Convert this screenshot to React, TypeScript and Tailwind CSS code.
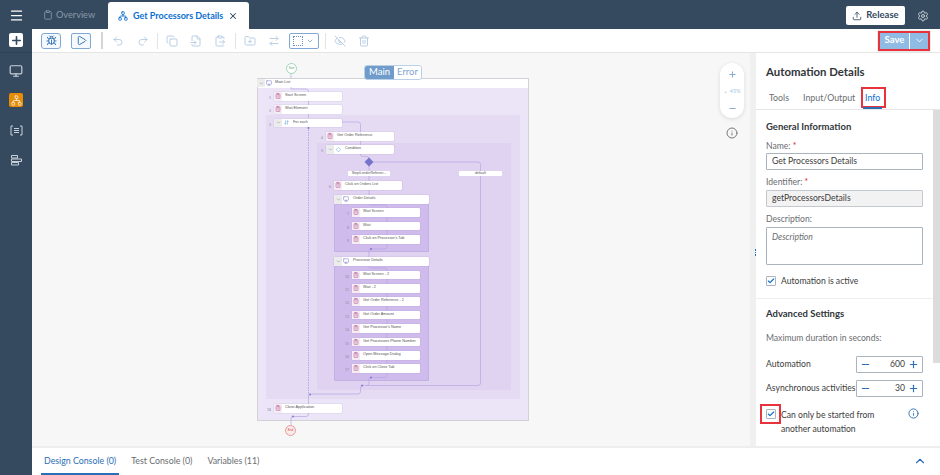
import React from "react";
import {
  ArrowDownUp,
  ArrowRightLeft,
  Bug,
  Check,
  ChevronDown,
  ChevronUp,
  Clipboard,
  ClipboardList,
  ClipboardPaste,
  Copy,
  Diamond,
  EyeOff,
  FileInput,
  FolderPlus,
  Info,
  Menu,
  Minus,
  Monitor,
  Network,
  Play,
  Plus,
  Redo2,
  Settings,
  Trash2,
  Undo2,
  Upload,
  X,
} from "lucide-react";

type Step = { n?: string; label: string; x: number; y: number; w?: number; group?: boolean; icon?: string };

const steps: Step[] = [
  { n: "1", label: "Start Screen", x: 274, y: 92 },
  { n: "2", label: "Wait Element", x: 274, y: 105 },
  { n: "3", label: "For each", x: 274, y: 118.5, group: true, icon: "loop" },
  { n: "4", label: "Get Order Reference", x: 326, y: 132 },
  { n: "5", label: "Condition", x: 326, y: 145, group: true, icon: "cond" },
  { n: "6", label: "Click on Orders List", x: 334, y: 181 },
  { label: "Order Details", x: 334, y: 195, w: 95, group: true, icon: "sub" },
  { n: "7", label: "Wait Screen", x: 352, y: 208 },
  { n: "8", label: "Wait", x: 352, y: 221.5 },
  { n: "9", label: "Click on Processor's Tab", x: 352, y: 235 },
  { label: "Processor Details", x: 334, y: 257, w: 95, group: true, icon: "sub" },
  { n: "10", label: "Wait Screen - 2", x: 352, y: 270.5 },
  { n: "11", label: "Wait - 2", x: 352, y: 284 },
  { n: "12", label: "Get Order Reference - 2", x: 352, y: 297 },
  { n: "13", label: "Get Order Amount", x: 352, y: 310.5 },
  { n: "14", label: "Get Processor's Name", x: 352, y: 324 },
  { n: "15", label: "Get Processors Phone Number", x: 352, y: 337.5 },
  { n: "16", label: "Open Message Dialog", x: 352, y: 351 },
  { n: "17", label: "Click on Close Tab", x: 352, y: 364 },
  { n: "18", label: "Close Application", x: 274, y: 404 },
];

// canvas starts at x=32, y=53
const CX = 32;
const CY = 53;

// where a flow line comes back in
const dots = [
  [308.5, 128],
  [371, 249],
  [371, 377.5],
  [362, 385.5],
  [310, 394.5],
  [293, 416.5],
];

function Node({ s }: { s: Step }) {
  return (
    <>
      {s.n && (
        <span
          className="absolute text-[3.5px] leading-none text-[#8a8a9a]"
          style={{ left: s.x - 5 - (s.n.length - 1) * 2 - CX, top: s.y + 5 - CY }}
        >
          {s.n}
        </span>
      )}
      <div
        className="absolute flex h-[8.5px] items-center overflow-hidden rounded-[1px] bg-white shadow-[0_0_1px_#8f7fb8]"
        style={{ left: s.x - CX, top: s.y - CY, width: s.w ?? 68 }}
      >
        {s.group ? (
          <span className="flex h-full w-[8px] flex-none items-center justify-center bg-[#ececec]">
            <ChevronDown size={5} className="text-[#777]" />
          </span>
        ) : (
          <span className="flex h-full w-[8px] flex-none items-center justify-center bg-[#f6ecf4]">
            <ClipboardList size={6} className="text-[#b0568f]" />
          </span>
        )}
        {s.group && (
          <span className="flex w-[8px] flex-none items-center justify-center">
            {s.icon === "loop" && <ArrowDownUp size={5} className="text-[#3d8ad9]" />}
            {s.icon === "cond" && <Diamond size={5} className="text-[#3d8ad9]" />}
            {s.icon === "sub" && <Monitor size={6} className="text-[#7a79c9]" />}
          </span>
        )}
        <span className="ml-[3px] whitespace-nowrap font-['Liberation_Sans',sans-serif] text-[3.8px] leading-none text-[#555]">
          {s.label}
        </span>
      </div>
    </>
  );
}

function Diagram() {
  return (
    <>
      <div className="absolute left-[254px] top-[10px] flex h-[11px] w-[11px] items-center justify-center rounded-full border border-[#9fd6b4] bg-white font-['Liberation_Sans',sans-serif] text-[2.6px] text-[#3f9f66]">
        Start
      </div>
      <div className="absolute left-[225px] top-[25px] h-[343px] w-[272px] border border-[#d3d1d8] bg-[#ece5f8]">
        <div className="absolute left-0 top-0 h-[9px] w-full bg-white" />
      </div>
      <div className="absolute left-[234px] top-[62px] h-[284px] w-[254px] bg-[#e5dcf3]" />
      <div className="absolute left-[285px] top-[90px] h-[247px] w-[194px] bg-[#e0d2f1]" />
      <div className="absolute left-[302px] top-[142px] h-[57px] w-[95px] rounded-[1px] border border-[#c3b0e2] bg-[#d0bcec]" />
      <div className="absolute left-[302px] top-[204px] h-[124px] w-[95px] rounded-[1px] border border-[#c3b0e2] bg-[#d0bcec]" />

      <div className="absolute left-[225px] top-[26px] flex h-[8px] items-center">
        <span className="flex h-full w-[8px] items-center justify-center bg-[#ececec]">
          <ChevronDown size={5} className="text-[#777]" />
        </span>
        <Monitor size={6} className="ml-[1px] text-[#7a79c9]" />
        <span className="ml-[3px] font-['Liberation_Sans',sans-serif] text-[3.8px] text-[#555]">Main List</span>
      </div>

      <svg className="absolute left-0 top-0" width={718} height={393} viewBox="32 53 718 393" fill="none" stroke="#b5a6e4" strokeWidth={0.7}>
        <path d="M291 74v4M291 87v2h15a2.500 2.500 0 0 1 2.500 2.500V118" />
        <path d="M308.500 127V395" stroke="#a495e6" strokeDasharray="1.500 1" />
        <path d="M308.500 395V414a2.500 2.500 0 0 1 -2.500 2.500H293a2 2 0 0 0 -2 2V425" />
        <path d="M342 122h16a2.500 2.500 0 0 1 2.500 2.500V132M360.500 140V145" />
        <path d="M360.500 153v1.500a2 2 0 0 0 2 2h4.500a2 2 0 0 1 2 2v1" />
        <path d="M373 162H478a2.500 2.500 0 0 1 2.500 2.500V383a2.500 2.500 0 0 1 -2.500 2.500H363a2.500 2.500 0 0 0 -2.500 2.500v3.500a2.500 2.500 0 0 1 -2.500 2.500H310" />
        <path d="M369 166V181M369 189V195" />
        <path d="M369 203a2 2 0 0 0 2 2h14a2 2 0 0 1 2 2V246a3 3 0 0 1 -3 3H371a2 2 0 0 0 -2 2V257" />
        <path d="M369 266a2 2 0 0 0 2 2h14a2 2 0 0 1 2 2V375a2.500 2.500 0 0 1 -2.500 2.500H371a2 2 0 0 0 -2 2V383a2.500 2.500 0 0 1 -2.500 2.500" />
        <path d="M369 157.500l4.500 4.500-4.500 4.500-4.500-4.500z" fill="#7474cc" stroke="none" />
        {dots.map(([x, y]) => (
          <circle key={`${x}-${y}`} cx={x} cy={y} r={0.9} fill="#7474cc" stroke="none" />
        ))}
      </svg>

      {steps.map((s) => (
        <Node key={s.label} s={s} />
      ))}

      <div className="absolute left-[316px] top-[118px] flex h-[5px] w-[42px] items-center justify-center rounded-[1px] bg-white font-['Liberation_Sans',sans-serif] text-[3.6px] text-[#555]">
        Step0.orderReferen...
      </div>
      <div className="absolute left-[427px] top-[118px] flex h-[5px] w-[43px] items-center justify-center rounded-[1px] bg-white font-['Liberation_Sans',sans-serif] text-[3.6px] text-[#555]">
        default
      </div>
      <div className="absolute left-[253px] top-[372px] flex h-[11px] w-[11px] items-center justify-center rounded-full border border-[#e79a9a] bg-[#fbeaea] font-['Liberation_Sans',sans-serif] text-[3px] text-[#c94a4a]">
        End
      </div>
    </>
  );
}

function ToolIcon({ children, className }: { children: React.ReactNode; className: string }) {
  return <span className={`flex items-center justify-center text-[#b9cfe6] ${className}`}>{children}</span>;
}

function Sep({ className }: { className: string }) {
  return <span className={`h-[16px] w-[1px] bg-[#e4e4e4] ${className}`} />;
}

function Stepper({ value }: { value: string }) {
  return (
    <div className="flex h-[17px] w-[67px] flex-none items-center rounded-[1px] border border-[#a9b4be] bg-white px-[3px]">
      <Minus size={11} strokeWidth={2.5} className="text-[#2a6eb5]" />
      <span className="flex-1 pr-[3px] text-right text-[#3c3c3c]">{value}</span>
      <Plus size={11} strokeWidth={2.5} className="text-[#2a6eb5]" />
    </div>
  );
}

function Box() {
  return (
    <span className="flex h-[10px] w-[10px] flex-none items-center justify-center rounded-[1px] border border-[#a9b4be] bg-white">
      <Check size={8} strokeWidth={3.5} className="text-[#0a6ed1]" />
    </span>
  );
}

export default function App() {
  return (
    <div className="flex h-[475px] w-[940px] overflow-hidden bg-white font-['Lato',sans-serif] text-[8.6px]">
      <aside className="flex w-[32px] flex-none flex-col items-center bg-[#354a5f] text-[#c8d1da]">
        <Menu size={15} className="mt-[8px] text-white" />
        <div className="mt-[10px] flex h-[14px] w-[14px] items-center justify-center rounded-[2px] bg-white">
          <Plus size={13} strokeWidth={3} className="text-[#354a5f]" />
        </div>
        <div className="mt-[5px] h-[1px] w-full bg-[#2e4154]" />
        <Monitor size={14} className="mt-[11px]" />
        <div className="mt-[15px] flex h-[14px] w-[14px] items-center justify-center rounded-[2px] bg-[#e78c07]">
          <Network size={11} className="text-[#fbe6c8]" />
        </div>
        <svg className="mt-[18px] flex-none" width="13" height="11" viewBox="0 0 13 11" fill="none" stroke="#c8d1da" strokeWidth="1">
          <path d="M3 1H1v9h2M10 1h2v9h-2M4 3.500h5M4 5.500h5M4 7.500h5" />
        </svg>
        <svg className="mt-[18px] flex-none" width="13" height="12" viewBox="0 0 13 12" fill="none" stroke="#c8d1da" strokeWidth="1">
          <path d="M1.500 1.500h6v2.500h-6zM1.500 5h10v2.500h-10zM1.500 8.500h7v2.500h-7z" />
        </svg>
      </aside>

      <main className="flex min-w-0 flex-1 flex-col">
        <header className="flex h-[29px] flex-none items-end bg-[#354a5f]">
          <div className="mb-[7px] ml-[11px] flex w-[65px] items-center gap-[3px] text-[9.200px] text-[#8a99a8]">
            <Clipboard size={10} />
            Overview
          </div>
          <div className="flex h-[27px] w-[141px] items-center whitespace-nowrap rounded-t-[3px] bg-white pl-[10px] text-[9px] font-bold text-[#0a6ed1]">
            <Network size={10} />
            <span className="ml-[5px]">Get Processors Details</span>
            <X size={10} strokeWidth={2.5} className="ml-[5px] text-[#354a5f]" />
          </div>
          <div className="mb-[4px] ml-auto flex h-[19px] w-[59px] items-center justify-center gap-[4px] rounded-[2px] bg-white text-[9.500px] font-bold text-[#354a5f]">
            <Upload size={10} />
            Release
          </div>
          <Settings size={12} className="mb-[7px] ml-[12px] mr-[11px] text-[#c8d1da]" />
        </header>

        <div className="flex h-[24px] flex-none items-center border-b border-[#e5e5e5] bg-white">
          <span className="ml-[9px] flex h-[16px] w-[20px] items-center justify-center rounded-[3px] border border-[#7fa8d2] bg-[#f5f9fd] text-[#2a6eb5]">
            <Bug size={11} />
          </span>
          <span className="ml-[10px] flex h-[16px] w-[20px] items-center justify-center rounded-[2px] border border-[#7fa8d2] bg-[#f5f9fd] text-[#2a6eb5]">
            <Play size={11} />
          </span>
          <span className="ml-[10px] h-[17px] w-[2px] bg-[#d5d5d5]" />
          <ToolIcon className="ml-[9px] w-[12px]"><Undo2 size={12} /></ToolIcon>
          <ToolIcon className="ml-[13px] w-[12px]"><Redo2 size={12} /></ToolIcon>
          <Sep className="ml-[8px]" />
          <ToolIcon className="ml-[8px] w-[12px]"><Copy size={12} /></ToolIcon>
          <ToolIcon className="ml-[12px] w-[12px]"><FileInput size={12} /></ToolIcon>
          <ToolIcon className="ml-[12px] w-[12px]"><ClipboardPaste size={12} /></ToolIcon>
          <Sep className="ml-[9px]" />
          <ToolIcon className="ml-[8px] w-[12px]"><FolderPlus size={12} /></ToolIcon>
          <ToolIcon className="ml-[12px] w-[12px]"><ArrowRightLeft size={12} /></ToolIcon>
          <span className="ml-[9px] flex h-[16px] w-[30px] items-center gap-[3px] rounded-[2px] border border-[#7fa8d2] pl-[3px] text-[#6b93bd]">
            <span className="h-[10px] w-[10px] border border-dotted border-[#6b93bd]" />
            <ChevronDown size={8} />
          </span>
          <Sep className="ml-[6px]" />
          <ToolIcon className="ml-[8px] w-[12px]"><EyeOff size={12} /></ToolIcon>
          <ToolIcon className="ml-[12px] w-[12px]"><Trash2 size={12} /></ToolIcon>
          <div className="ml-auto mr-[10px] flex h-[20px] w-[52px] items-stretch border-2 border-[#e8323c] shadow-[0_0_1px_#888]">
            <span className="flex flex-1 items-center justify-center border-r border-white bg-[#8fbbe4] text-[9.500px] font-bold text-white">
              Save
            </span>
            <span className="flex w-[18px] items-center justify-center bg-[#8fbbe4] text-white">
              <ChevronDown size={11} />
            </span>
          </div>
        </div>

        <div className="flex min-h-0 flex-1">
          <div className="relative flex-1 bg-[#f7f7f7]">
            <Diagram />
            <div className="absolute left-[332px] top-[12px] flex h-[15px] w-[58px] overflow-hidden rounded-[3px] border border-[#b9d0e8] text-[9.500px]">
              <span className="flex w-[29px] items-center justify-center bg-[#6f9ccb] text-white">Main</span>
              <span className="flex flex-1 items-center justify-center bg-white text-[#7fa6d0]">Error</span>
            </div>
            <div className="absolute left-[688px] top-[10px] flex h-[55px] w-[24px] flex-col items-center rounded-full bg-white text-[#7fa6d0] shadow-[0_1px_4px_rgba(0,0,0,0.12)]">
              <Plus size={9} strokeWidth={2.5} className="mt-[7px]" />
              <span className="mt-[7px] flex h-[10px] items-center whitespace-nowrap text-[5.500px] text-[#a9c4e0]">⌄ 45%</span>
              <Minus size={9} strokeWidth={2.5} className="mt-[8px]" />
            </div>
            <Info size={12} className="absolute left-[694px] top-[74px] text-[#777]" />
          </div>

          <div className="flex w-[6px] flex-none items-center justify-end bg-[#f0f0f0]">
            <span className="mb-[-6px] flex flex-col gap-[1px]">
              <span className="h-[1.500px] w-[1.500px] bg-[#2a6eb5]" />
              <span className="h-[1.500px] w-[1.500px] bg-[#2a6eb5]" />
              <span className="h-[1.500px] w-[1.500px] bg-[#2a6eb5]" />
            </span>
          </div>

          <section className="flex w-[184px] flex-none flex-col bg-white text-[#555]">
            <div className="relative h-[57px] flex-none border-b border-[#e5e5e5]">
              <h2 className="pl-[10px] pt-[10px] text-[11.400px] font-bold leading-[17px] text-[#32363a]">Automation Details</h2>
              <div className="mt-[11px] flex whitespace-nowrap text-[8.800px] leading-[13px] text-[#6a6d70]">
                <span className="ml-[13px] w-[34px]">Tools</span>
                <span className="w-[62px]">Input/Output</span>
                <span className="text-[#0a6ed1]">Info</span>
              </div>
              <span className="absolute left-[105px] top-[34px] h-[21px] w-[25px] border-2 border-[#e8323c]" />
              <span className="absolute bottom-0 left-[107px] h-[2px] w-[19px] bg-[#2a6eb5]" />
            </div>

            <div className="flex min-h-0 flex-1">
              <div className="w-[177px] flex-none pl-[10px] pr-[10px]">
                <h3 className="mt-[10px] text-[9.500px] font-bold leading-[13px] text-[#32363a]">General Information</h3>
                <p className="mt-[7px] leading-[13px] text-[#6a6d70]">Name:<span className="text-[#d8232a]"> *</span></p>
                <div className="flex h-[17px] w-[157px] items-center rounded-[1px] border border-[#a9b4be] px-[5px] text-[#3c3c3c]">Get Processors Details</div>
                <p className="mt-[6px] leading-[13px] text-[#6a6d70]">Identifier:<span className="text-[#d8232a]"> *</span></p>
                <div className="mt-[1px] flex h-[17px] w-[157px] items-center rounded-[1px] border border-[#c3c9cf] bg-[#f2f2f2] px-[5px] text-[#3c3c3c]">getProcessorsDetails</div>
                <p className="mt-[6px] leading-[13px] text-[#6a6d70]">Description:</p>
                <div className="mt-[1px] h-[38px] w-[157px] rounded-[1px] border border-[#a9b4be] px-[5px] pt-[3px] italic text-[#6a6d70]">Description</div>
                <div className="mt-[10px] flex items-center gap-[5px] text-[#3c3c3c]"><Box />Automation is active</div>
                <div className="-ml-[10px] mt-[10px] h-[1px] w-[177px] bg-[#eeeeee]" />
                <h3 className="mt-[8px] text-[9.500px] font-bold leading-[13px] text-[#32363a]">Advanced Settings</h3>
                <p className="mt-[12px] leading-[13px] text-[#6a6d70]">Maximum duration in seconds:</p>
                <div className="mt-[11px] flex items-center justify-between text-[#3c3c3c]">
                  Automation
                  <Stepper value="600" />
                </div>
                <div className="mt-[7px] flex items-center justify-between whitespace-nowrap text-[#3c3c3c]">
                  Asynchronous activities
                  <Stepper value="30" />
                </div>
                <div className="relative mt-[11px] flex gap-[5px] text-[#3c3c3c]">
                  <span className="pt-[1px]"><Box /></span>
                  <span className="w-[110px] leading-[14px]">Can only be started from another automation</span>
                  <Info size={11} className="absolute left-[142px] top-0 text-[#2a6eb5]" />
                  <span className="absolute -left-[6px] -top-[4px] h-[20px] w-[21px] border-2 border-[#e8323c]" />
                </div>
              </div>
              <div className="w-[7px] flex-none">
                <div className="h-[253px] bg-[#dcdcdc]" />
              </div>
            </div>
          </section>
        </div>

        <footer className="flex h-[29px] flex-none items-center border-t-2 border-[#eeeeee] bg-white pb-[2px] pl-[12px] pr-[13px] text-[8.800px] text-[#6a6d70]">
          <span className="relative text-[#2a6eb5]">
            Design Console (0)
            <span className="absolute -bottom-[8px] -left-[3px] -right-[3px] h-[2px] bg-[#2a6eb5]" />
          </span>
          <span className="ml-[15px]">Test Console (0)</span>
          <span className="ml-[15px]">Variables (11)</span>
          <ChevronUp size={14} className="ml-auto text-[#2a6eb5]" />
        </footer>
      </main>
    </div>
  );
}
